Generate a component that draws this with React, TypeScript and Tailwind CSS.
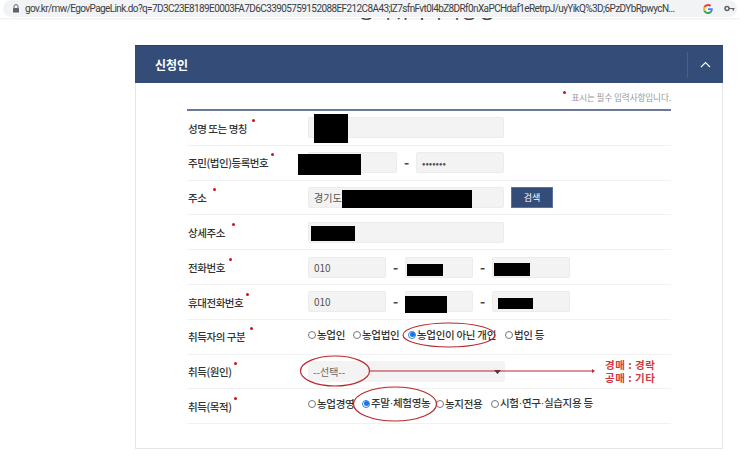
import type { ReactNode } from "react";

const KR = "font-['Noto_Sans_CJK_KR','Noto_Sans',sans-serif]";

function Redact({ className }: { className: string }) {
  return <span className={`absolute bg-black ${className}`} />;
}

function Field({ className = "", text, children }: { className?: string; text?: string; children?: ReactNode }) {
  return (
    <div className={`relative h-[21px] bg-[#f3f3f3] border border-[#ececec] rounded-[2px] flex items-center pl-[5px] text-[10px] text-[#555] ${className}`}>
      {text}
      {children}
    </div>
  );
}

function Dash({ className }: { className: string }) {
  return <span className={`text-center text-[14px] font-bold text-[#444] ${className}`}>-</span>;
}

function Row({ label, dot, children }: { label: string; dot: string; children: ReactNode }) {
  return (
    <div className="flex items-center h-[34.8px] border-b border-[#f1f1f1]">
      <div className="relative w-[121px] pl-px pt-px text-[10.5px] font-medium tracking-[-0.45px] text-[#333]">
        {label}
        <span className={`absolute -top-px w-[3px] h-[3px] rounded-full bg-[#c8141e] ${dot}`} />
      </div>
      {children}
    </div>
  );
}

function Radio({ label, checked, className = "" }: { label: ReactNode; checked?: boolean; className?: string }) {
  return (
    <span className={`flex items-center text-[10.5px] font-medium tracking-[-0.3px] text-[#333] ${className}`}>
      <span className={`w-[8px] h-[8px] rounded-full border mr-px shrink-0 flex items-center justify-center ${checked ? "border-[#2a7de1]" : "border-[#777]"}`}>
        {checked && <span className="w-[5px] h-[5px] rounded-full bg-[#1a73e8]" />}
      </span>
      <span className="whitespace-nowrap">{label}</span>
    </span>
  );
}

// the middle dot is narrow in the original, CJK fonts draw it full width
function Mid() {
  return <span className="font-['Liberation_Sans',sans-serif]">·</span>;
}

export default function App() {
  return (
    <div className={`relative w-[740px] h-[457px] overflow-hidden bg-white ${KR}`}>
      {/* Address bar */}
      <div className="relative z-10 h-[18px] bg-white shadow-[0_1px_2px_rgba(0,0,0,0.08)]">
        <div className="h-[17px] mx-[3px] bg-[#f1f3f4] rounded-[9px] flex items-center pl-[9px] pr-[6px]">
          <svg width="8" height="9" viewBox="0 0 8 9" className="mr-[5px] shrink-0">
            <path d="M2 4V2.6a2 2 0 0 1 4 0V4" fill="none" stroke="#5f6368" strokeWidth="1" />
            <rect x="1" y="4" width="6" height="4.6" rx="0.6" fill="#5f6368" />
          </svg>
          <span className="w-[664px] shrink-0 whitespace-nowrap overflow-hidden font-['Roboto',sans-serif] text-[10px] tracking-[-0.6px] text-[#3c4043]">
            gov.kr/mw/EgovPageLink.do?q=7D3C23E8189E0003FA7D6C33905759152088EF212C8A43;lZ7sfnFvt0l4bZ8DRf0nXaPCHdaf1eRetrpJ/uyYikQ%3D;6PzDYbRpwycN...
          </span>
          <svg width="10" height="10" viewBox="0 0 48 48" className="ml-[14px] shrink-0">
            <path fill="#EA4335" d="M24 9.5c3.5 0 6.7 1.3 9.1 3.5l6.8-6.8C35.8 2.4 30.300 0 24 0 14.600 0 6.500 5.400 2.600 13.200l7.900 6.100C12.400 13.700 17.700 9.500 24 9.500z" />
            <path fill="#4285F4" d="M47 24.500c0-1.600-.1-3.100-.4-4.500H24v9h12.900c-.6 3-2.300 5.500-4.800 7.200l7.700 6c4.500-4.200 7.200-10.300 7.200-17.700z" />
            <path fill="#FBBC05" d="M10.500 28.700c-.5-1.400-.8-3-.8-4.700s.3-3.200.8-4.700l-7.900-6.100C.9 16.500 0 20.100 0 24s.9 7.500 2.600 10.800l7.900-6.100z" />
            <path fill="#34A853" d="M24 48c6.500 0 11.900-2.100 15.900-5.800l-7.700-6c-2.100 1.400-4.900 2.300-8.200 2.300-6.300 0-11.600-4.200-13.500-9.800l-7.900 6.100C6.500 42.600 14.600 48 24 48z" />
          </svg>
          <svg width="11" height="7" viewBox="0 0 11 7" className="ml-[11px] shrink-0">
            <circle cx="3" cy="3.500" r="2" fill="none" stroke="#5f6368" strokeWidth="1.500" />
            <path d="M5 3h5.500v1H10v1.500H8.500V4H5z" fill="#5f6368" />
          </svg>
        </div>
      </div>

      {/* Page title, scrolled under the bar */}
      <div className="h-[27px] flex justify-center pl-[114px] overflow-hidden">
        <span className="-mt-[20px] text-[17px] font-medium tracking-[1.5px] text-[#444] whitespace-nowrap">농지취득자격증명</span>
      </div>

      {/* Panel */}
      <div className="ml-[135px] w-[588px] h-[404px] border border-t-0 border-[#e6e6e6]">
        <div className="-mx-px h-[38px] bg-[#344c78] border-t border-[#2c4169] flex items-center justify-between">
          <span className="ml-[20px] text-[12px] font-bold text-white">신청인</span>
          <div className="w-[36px] h-[26px] border-l border-[#4a6088] flex items-center justify-center">
            <svg width="11" height="7" viewBox="0 0 11 7">
              <path d="M1 6l4.500-4.500L10 6" fill="none" stroke="#fff" strokeWidth="1.200" />
            </svg>
          </div>
        </div>

        <div className="pl-[51px] pr-[51px]">
          <div className="relative h-[26px] flex items-center justify-end pt-[2px] text-[8.6px] tracking-[-0.1px] text-[#999]">
            <span className="absolute right-[105px] top-[8px] w-[3px] h-[3px] rounded-full bg-[#c8141e]" />
            표시는 필수 입력사항입니다.
          </div>
          <div className="border-t-2 border-[#6b7a94]">
            <Row label="성명 또는 명칭" dot="left-[65px]">
              <Field className="w-[196px]">
                <Redact className="left-[5px] -top-[4px] w-[34px] h-[29px]" />
              </Field>
            </Row>
            <Row label="주민(법인)등록번호" dot="left-[84px]">
              <Field className="w-[89px]">
                <Redact className="-left-[11px] top-[1px] w-[63px] h-[21px]" />
              </Field>
              <Dash className="w-[19px]" />
              <Field className="w-[88px] text-[#333]" text="•••••••" />
            </Row>
            <Row label="주소" dot="left-[26px]">
              <Field className="w-[196px]" text="경기도">
                <Redact className="left-[33px] top-[2px] w-[130px] h-[18px]" />
              </Field>
              <button className="ml-[7px] w-[42px] h-[21px] bg-[#344c78] border border-[#5b73a0] text-[9px] text-white">검색</button>
            </Row>
            <Row label="상세주소" dot="left-[45px]">
              <Field className="w-[196px]">
                <Redact className="left-[2px] top-[3px] w-[44px] h-[15px]" />
              </Field>
            </Row>
            <Row label="전화번호" dot="left-[42px]">
              <Field className="w-[78px]" text="010" />
              <Dash className="w-[19px]" />
              <Field className="w-[68px]">
                <Redact className="left-[1px] top-[6px] w-[36px] h-[12px]" />
              </Field>
              <Dash className="w-[19px]" />
              <Field className="w-[78px]">
                <Redact className="left-[1px] top-[5px] w-[36px] h-[13px]" />
              </Field>
            </Row>
            <Row label="휴대전화번호" dot="left-[59px]">
              <Field className="w-[78px]" text="010" />
              <Dash className="w-[19px]" />
              <Field className="w-[68px]">
                <Redact className="-left-px top-[4px] w-[42px] h-[17px]" />
              </Field>
              <Dash className="w-[19px]" />
              <Field className="w-[78px]">
                <Redact className="left-[5px] top-[6px] w-[35px] h-[11px]" />
              </Field>
            </Row>
            <Row label="취득자의 구분" dot="left-[63px]">
              <div className="flex items-center -mt-[4px]">
                <Radio label="농업인" className="w-[45px]" />
                <Radio label="농업법인" className="w-[55px]" />
                <Radio label="농업인이 아닌 개인" checked className="w-[97px]" />
                <Radio label="법인 등" />
              </div>
            </Row>
            <Row label="취득(원인)" dot="left-[47px]">
              <div className="relative w-[197px] h-[21px] bg-[#f3f3f3] rounded-[2px] flex items-center pl-[5px] text-[10px] text-[#666]">
                --선택--
                <svg width="7" height="4" viewBox="0 0 7 4" className="absolute right-[4px] top-[9px]">
                  <path d="M0 0l3.500 4L7 0z" fill="#333" />
                </svg>
              </div>
            </Row>
            <Row label="취득(목적)" dot="left-[47px]">
              <div className="flex items-center -mt-[5px]">
                <Radio label="농업경영" className="w-[54px]" />
                <Radio label={<>주말<Mid />체험영농</>} checked className="w-[74px]" />
                <Radio label="농지전용" className="w-[55px]" />
                <Radio label={<>시험<Mid />연구<Mid />실습지용 등</>} />
              </div>
            </Row>
          </div>
        </div>
      </div>

      {/* Hand-drawn annotations */}
      <svg width="740" height="457" className="absolute left-0 top-0 pointer-events-none">
        <g fill="none" stroke="#b8282e" strokeWidth="1.200">
          <ellipse cx="449" cy="335" rx="46" ry="12" />
          <ellipse cx="335" cy="371" rx="34.500" ry="15" />
          <ellipse cx="395" cy="404" rx="41.500" ry="17" />
          <path d="M370 371H592" />
        </g>
        <path d="M592 369l3 2-3 2z" fill="#b8282e" />
      </svg>
      <div className="absolute left-[605px] top-[358px] text-[10.500px] leading-[13px] font-bold tracking-[0.5px] text-[#d0393f]">
        <div>경매 : 경락</div>
        <div>공매 : 기타</div>
      </div>
    </div>
  );
}
